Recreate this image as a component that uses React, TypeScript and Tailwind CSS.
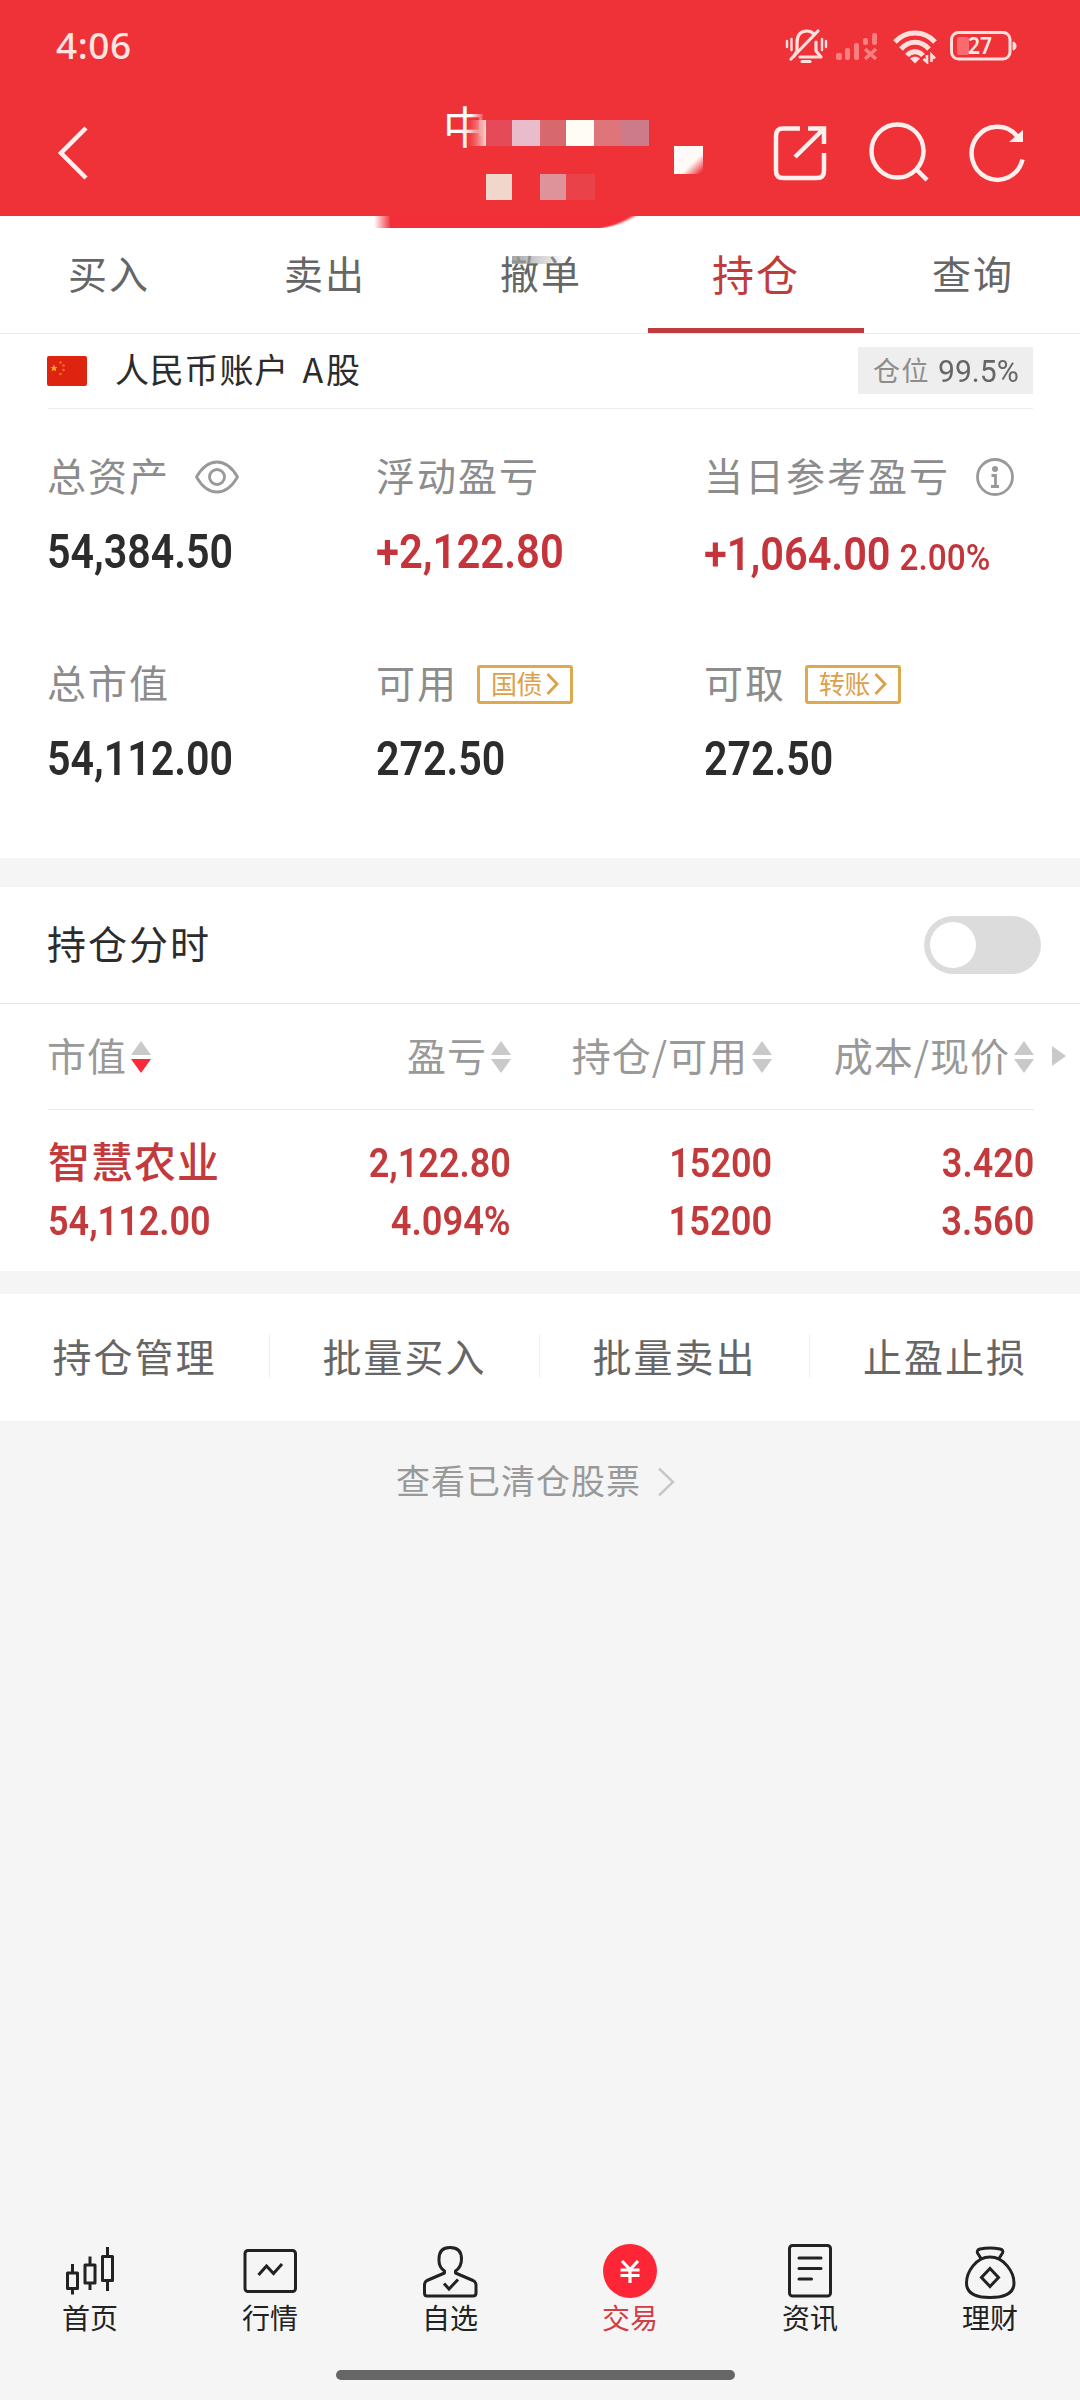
import React from 'react';

const CJK = "font-['Noto_Sans_CJK_SC',sans-serif]";

function Num({ children, className = '' }: { children: React.ReactNode; className?: string }) {
  return (
    <span
      className={`inline-block whitespace-nowrap font-['Roboto','Liberation_Sans',sans-serif] font-semibold leading-none ${className}`}
    >
      {children}
    </span>
  );
}

/* CJK label whose glyphs are optically centred on the row */
function Label({ children }: { children: React.ReactNode }) {
  return <span className="pb-[5px] leading-none">{children}</span>;
}

function Sort({ active = false }: { active?: boolean }) {
  return (
    <svg width="20" height="32" viewBox="0 0 20 32" className="shrink-0">
      <path d="M10 0L20 14H0Z" fill="#c9c9c9" />
      <path d="M0 18H20L10 32Z" fill={active ? '#fa2a3c' : '#c9c9c9'} />
    </svg>
  );
}

function StatusIcons() {
  return (
    <svg width="232" height="36" viewBox="785 28 232 36" fill="none" stroke="#ffe0dc" className="ml-auto">
      <g strokeWidth="3.200" strokeLinecap="round">
        <path d="M794 56L797 51V43C797 34 801 31 807 31C810 31 812 32 814 34" />
        <path d="M816 42V51L821 57H800" strokeLinejoin="round" />
        <path d="M818 31L791 59" />
        <path d="M802 61.500H810" />
        <path d="M787 41V47M791.500 39V50M822 39V50M826 41V47" strokeWidth="2.400" />
      </g>
      <g fill="#fa7f80" stroke="none">
        <rect x="836" y="53" width="6" height="7" rx="2" />
        <rect x="845" y="48" width="5" height="12" rx="2" />
        <rect x="854" y="43" width="5" height="17" rx="2" />
        <rect x="863" y="38" width="5" height="7" rx="2" />
        <rect x="872" y="33" width="5" height="12" rx="2" />
      </g>
      <path d="M865 49L876 59M876 49L865 59" stroke="#fa7f80" strokeWidth="3.500" />
      <g strokeWidth="5">
        <path d="M895 42C906 30 924 30 935 42" />
        <path d="M901 49C909 40 921 40 929 49" />
        <path d="M907 55.500C911 50.500 919 50.500 923 55.500" />
      </g>
      <path d="M910 58.500C913 56 917 56 920 58.500L915 63.500Z" fill="#ffe0dc" stroke="none" />
      <path d="M923.500 59L927 62V55M931.500 62V55L935 58.500" strokeWidth="2.600" />
      <rect x="951.500" y="32.500" width="58.500" height="26.500" rx="7" strokeWidth="3" />
      <rect x="957" y="37" width="12" height="18" rx="2" fill="#fb6a70" stroke="none" />
      <path d="M1013 42C1017 42 1017 50 1013 50Z" fill="#ffe0dc" />
      <text
        x="968"
        y="54"
        fontSize="24"
        fontWeight="600"
        stroke="none"
        fill="#ffe9e6"
        textLength="24"
        lengthAdjust="spacingAndGlyphs"
        fontFamily="Noto Sans, sans-serif"
      >
        27
      </text>
    </svg>
  );
}

function HeaderMosaic() {
  return (
    <svg
      width="345"
      height="170"
      viewBox="370 100 345 170"
      className="pointer-events-none absolute left-[370px] top-[100px] z-10"
    >
      <defs>
        <linearGradient id="fadeIn" x1="0" x2="1">
          <stop offset="0" stopColor="#ef3138" stopOpacity="0" />
          <stop offset="1" stopColor="#f6dcd4" />
        </linearGradient>
        <linearGradient id="cover" x1="0" x2="1">
          <stop offset="0" stopColor="#ef3138" stopOpacity="0" />
          <stop offset="1" stopColor="#ef3138" />
        </linearGradient>
        <linearGradient id="blobLeft" x1="0" x2="1">
          <stop offset="0" stopColor="#f22e38" stopOpacity="0" />
          <stop offset="1" stopColor="#f22e38" />
        </linearGradient>
        <linearGradient id="corner" x1="0" y1="0" x2="1" y2="1">
          <stop offset="0.620" stopColor="#fffaf8" />
          <stop offset="0.950" stopColor="#ef3138" />
        </linearGradient>
        <filter id="soft" x="-10%" y="-50%" width="120%" height="200%">
          <feGaussianBlur stdDeviation="2.500 0" />
        </filter>
      </defs>
      <rect x="470" y="104" width="16" height="48" fill="url(#cover)" />
      <rect x="463" y="120" width="23" height="26" fill="url(#fadeIn)" />
      <rect x="486" y="120" width="27" height="26" fill="#e44a57" />
      <rect x="512" y="120" width="28" height="26" fill="#e8bccb" />
      <rect x="540" y="120" width="26" height="26" fill="#d7686e" />
      <rect x="566" y="120" width="29" height="26" fill="#fffcf6" />
      <rect x="594" y="120" width="28" height="26" fill="#dd757b" />
      <rect x="622" y="120" width="27" height="26" fill="#cd7b8a" />
      <rect x="674" y="146" width="29" height="28" fill="url(#corner)" />
      <rect x="486" y="174" width="26" height="26" fill="#f1d6cc" />
      <rect x="540" y="174" width="26" height="26" fill="#de929a" />
      <rect x="566" y="174" width="29" height="26" fill="#e94249" />
      <rect x="374" y="215" width="17" height="13" fill="url(#blobLeft)" />
      <path d="M390 215H560V228H390Z" fill="#f22e38" />
      <path d="M550 215H636Q618 226 602 228H550Z" fill="#f22e38" filter="url(#soft)" />
    </svg>
  );
}

function Header() {
  return (
    <header className="h-[216px] bg-[#ef3138]">
      <div className="flex h-[92px] items-center pl-14 pr-[63px]">
        <span className="pb-[3px] font-['Noto_Sans',sans-serif] text-[37px] font-medium leading-none tracking-[0.5px] text-[#ffe4e0]">
          4:06
        </span>
        <StatusIcons />
      </div>
      <div className="flex h-[122px] items-center">
        <svg width="32" height="56" viewBox="57 125 32 56" className="ml-[57px]" fill="none" stroke="#fff0ee" strokeWidth="4.500">
          <path d="M86 128L61 153L86 178" />
        </svg>
        <span className={`${CJK} -mt-[57px] ml-[354px] text-[44px] leading-none text-white`}>中</span>
        <svg
          width="260"
          height="64"
          viewBox="770 121 260 64"
          className="ml-auto mr-[50px]"
          fill="none"
          stroke="#fff0ee"
          strokeWidth="4.500"
        >
          <path d="M800 128.500H783Q776 128.500 776 136V171Q776 178 783 178H817Q824 178 824 171V153" />
          <path d="M808 128.500H824V144M824 128.500L795 157" />
          <ellipse cx="897.500" cy="151" rx="26" ry="26.500" />
          <path d="M917 170L927 180" />
          <path d="M1022.500 159.500A25.800 26.500 0 1 1 1017 136" />
          <path d="M1023 130V142H1009Z" fill="#fff0ee" stroke="none" />
        </svg>
      </div>
    </header>
  );
}

function Tabs() {
  return (
    <nav className={`${CJK} grid h-[118px] grid-cols-5 border-b border-[#ececec] bg-white text-[39px] tracking-[2px] text-[#666]`}>
      {['买入', '卖出', '撤单', '持仓', '查询'].map((t) =>
        t === '持仓' ? (
          <div key={t} className="relative flex items-center justify-center pb-[5px] text-[42px] text-[#c03c3c]">
            {t}
            <span className="absolute inset-x-0 bottom-0 h-[5px] bg-[#c03c3c]" />
          </div>
        ) : (
          <div key={t} className="relative flex items-center justify-center pb-[5px] pl-[2px]">
            {t}
            {t === '撤单' && (
              <span className="absolute left-[80px] top-[40px] h-[8px] w-[50px] bg-linear-to-r from-[#999999dd] to-[#dddddd44]" />
            )}
          </div>
        ),
      )}
    </nav>
  );
}

function Flag() {
  return (
    <svg width="40" height="30" viewBox="0 0 40 30">
      <rect width="40" height="30" rx="2" fill="#de2310" />
      <path d="M7 8.500L8 11H10.500L8.600 12.600L9.300 15.500L7 13.800L4.700 15.500L5.400 12.600L3.500 11H6Z" fill="#ffb01f" />
      <g fill="#f4701d">
        <circle cx="13.500" cy="6.500" r="1.300" />
        <circle cx="16.500" cy="9.500" r="1.300" />
        <circle cx="16.500" cy="14" r="1.300" />
        <circle cx="13.500" cy="18" r="1.300" />
      </g>
    </svg>
  );
}

function GoldTag({ children }: { children: string }) {
  return (
    <span className="ml-[19px] flex h-[39px] w-[96px] items-center rounded-[3px] border-[3px] border-[#dda94c] pl-[11px] text-[26px] leading-none tracking-[-0.500px] text-[#dda04a]">
      <span className="pb-[2px]">{children}</span>
      <svg width="13" height="22" viewBox="0 0 13 22" className="ml-1 shrink-0" fill="none" stroke="#dda04a" strokeWidth="2.800">
        <path d="M1.500 1L11 11L1.500 21" />
      </svg>
    </span>
  );
}

const bigNum = 'mt-[24px] origin-left scale-x-[0.858] text-[48px] tracking-normal';

function Account() {
  return (
    <section className={`${CJK} h-[524px] bg-white px-12`}>
      <div className="-mr-px flex h-[75px] items-center border-b border-[#ececec] pb-px">
        <span className="-ml-px">
          <Flag />
        </span>
        <span className="ml-7 pb-[3px] text-[34px] leading-none tracking-[0.8px] text-[#2c2c2c]">
          人民币账户 <span className="ml-[5px] tracking-[3px]">A</span>股
        </span>
        <span className="ml-auto flex h-[47px] w-[175px] items-center bg-[#eee] pl-[15px] text-[27px] leading-none tracking-[1.500px] text-[#8d8d8d]">
          <span className="pb-[3px]">仓位</span>
          <Num className="ml-2 origin-left scale-x-[0.94] text-[32px] !font-normal tracking-normal text-[#666]">99.5%</Num>
        </span>
      </div>
      <div className="-ml-px grid grid-cols-[329px_328px_1fr] pt-[41px] text-[39px] tracking-[2px] text-[#8c8c8c]">
        <div className="h-[207px]">
          <div className="flex h-[54px] items-center">
            <Label>总资产</Label>
            <svg width="44" height="34" viewBox="0 0 44 34" className="ml-[25px]" fill="none" stroke="#999" strokeWidth="2.800">
              <path d="M1.500 17C13 -3 31 -3 42.500 17C31 37 13 37 1.500 17Z" />
              <circle cx="22" cy="17" r="7.500" />
            </svg>
          </div>
          <Num className={`${bigNum} text-[#2c2c2c]`}>54,384.50</Num>
        </div>
        <div className="h-[207px]">
          <div className="flex h-[54px] items-center">
            <Label>浮动盈亏</Label>
          </div>
          <Num className="mt-[24px] origin-left scale-x-[0.87] text-[48px] tracking-normal text-[#c4343a]">+2,122.80</Num>
        </div>
        <div className="h-[207px]">
          <div className="flex h-[54px] items-center whitespace-nowrap">
            <Label>当日参考盈亏</Label>
            <svg width="40" height="40" viewBox="0 0 40 40" className="ml-[25px]" fill="none" stroke="#999" strokeWidth="2.800">
              <circle cx="20" cy="20" r="17.500" />
              <circle cx="20" cy="12" r="3" fill="#999" stroke="none" />
              <path d="M16.500 18.500H20.500V29.500M16 29.500H24" />
            </svg>
          </div>
          <Num className="mt-[27px] origin-left scale-x-[0.902] text-[46px] tracking-normal text-[#c4343a]">
            +1,064.00<span className="ml-[10px] text-[37px] font-medium">2.00%</span>
          </Num>
        </div>
        <div>
          <div className="flex h-[54px] items-center">
            <Label>总市值</Label>
          </div>
          <Num className={`${bigNum} text-[#2c2c2c]`}>54,112.00</Num>
        </div>
        <div>
          <div className="flex h-[54px] items-center">
            <Label>可用</Label>
            <GoldTag>国债</GoldTag>
          </div>
          <Num className={`${bigNum} text-[#2c2c2c]`}>272.50</Num>
        </div>
        <div>
          <div className="flex h-[54px] items-center">
            <Label>可取</Label>
            <GoldTag>转账</GoldTag>
          </div>
          <Num className={`${bigNum} text-[#2c2c2c]`}>272.50</Num>
        </div>
      </div>
    </section>
  );
}

function Holdings() {
  return (
    <section className={`${CJK} mt-[29px] h-[384px] bg-white`}>
      <div className="flex h-[117px] items-center justify-between border-b border-[#e6e6e6] pl-[47px] pr-[39px] text-[39px] tracking-[2px] text-[#2c2c2c]">
        <Label>持仓分时</Label>
        <span className="flex h-[58px] w-[117px] items-center rounded-full bg-[#dcdcdc] pl-[6px]">
          <span className="size-[46px] rounded-full bg-white" />
        </span>
      </div>
      <div className="relative ml-12 mr-[46px] flex h-[106px] items-center border-b border-[#ececec] text-[39px] leading-none tracking-[1px] text-[#999]">
        <div className="-ml-px flex w-[201px] items-center gap-1">
          <Label>市值</Label>
          <Sort active />
        </div>
        <div className="flex w-[263px] items-center justify-end gap-1">
          <Label>盈亏</Label>
          <Sort />
        </div>
        <div className="flex w-[261px] items-center justify-end gap-1">
          <Label>持仓/可用</Label>
          <Sort />
        </div>
        <div className="flex w-[262px] items-center justify-end gap-1">
          <Label>成本/现价</Label>
          <Sort />
        </div>
        <svg width="14" height="20" viewBox="0 0 14 20" className="absolute -right-[32px] top-[42px]">
          <path d="M0 0L14 10L0 20Z" fill="#c9c9c9" />
        </svg>
      </div>
      <div className="ml-12 mr-[46px] grid grid-cols-[200px_263px_261px_262px] pt-[22px] text-[41px] text-[#c23a3c]">
        <div className="flex h-[60px] items-center whitespace-nowrap pb-[5px] text-[42px] font-medium leading-none tracking-[1px]">
          智慧农业
        </div>
        {['2,122.80', '15200', '3.420'].map((v) => (
          <div key={v} className="flex h-[60px] items-center justify-end pt-[2px]">
            <Num className="origin-right scale-x-[0.878]">{v}</Num>
          </div>
        ))}
        <div className="-mt-px flex h-[60px] items-center">
          <Num className="origin-left scale-x-[0.878]">54,112.00</Num>
        </div>
        {['4.094%', '15200', '3.560'].map((v) => (
          <div key={v} className="-mt-px flex h-[60px] items-center justify-end">
            <Num className="origin-right scale-x-[0.884]">{v}</Num>
          </div>
        ))}
      </div>
    </section>
  );
}

function Actions() {
  return (
    <section className={`${CJK} mt-[23px] grid h-[127px] grid-cols-4 bg-white text-[39px] leading-none tracking-[2px] text-[#666]`}>
      {['持仓管理', '批量买入', '批量卖出', '止盈止损'].map((t, i) => (
        <div key={t} className="flex items-center pb-[3px]">
          <span className={`flex h-[44px] flex-1 items-center justify-center pb-[2px] ${i < 3 ? 'border-r border-[#f0f0f0]' : ''}`}>
            {t}
          </span>
        </div>
      ))}
    </section>
  );
}

const stroke = { fill: 'none', stroke: '#222', strokeWidth: 3, strokeLinejoin: 'round' as const, strokeLinecap: 'round' as const };

const navItems: { label: string; icon: React.ReactNode }[] = [
  {
    label: '首页',
    icon: (
      <g {...stroke} strokeLinecap="butt">
        <rect x="7.500" y="33" width="10" height="15.500" />
        <path d="M12.500 24V33M12.500 49V54.500" />
        <rect x="25" y="25" width="10" height="18" />
        <path d="M30 16.500V25M30 43V50" />
        <rect x="42.500" y="16.500" width="10" height="24" />
        <path d="M47.500 7V16M47.500 41V51" />
      </g>
    ),
  },
  {
    label: '行情',
    icon: (
      <g {...stroke}>
        <rect x="5" y="10.500" width="50.500" height="41" rx="3" />
        <path d="M18.500 35L26.500 26L33.500 33.500L42 24" strokeLinecap="butt" strokeLinejoin="miter" />
      </g>
    ),
  },
  {
    label: '自选',
    icon: (
      <g {...stroke}>
        <path d="M24.500 31V33L7 40.500Q4.500 42 4.500 45V53Q4.500 56 7 56H53Q56 56 56 53V45Q56 42 53 40.500L35.500 33V31Q41.500 27 41.500 19C41.500 12 38 7.500 30 7.500S19 12 19 19Q18.500 27 24.500 31Z" />
        <path d="M24 43.500L29 49L38 39.500" strokeLinecap="butt" strokeLinejoin="miter" />
      </g>
    ),
  },
  {
    label: '交易',
    icon: (
      <g>
        <circle cx="30" cy="31" r="27" fill="#fd2636" />
        <path d="M22 21L30 29.500L38 21M20.500 30H39.500M20.500 35.500H39.500M30 29V43" fill="none" stroke="#fff" strokeWidth="3.200" />
      </g>
    ),
  },
  {
    label: '资讯',
    icon: (
      <g {...stroke}>
        <rect x="9.500" y="5.500" width="41" height="50.500" rx="3" />
        <path d="M19 18H41M19 28.500H41M19 39H31.500" />
      </g>
    ),
  },
  {
    label: '理财',
    icon: (
      <g {...stroke}>
        <path d="M21 18.500L17.500 13Q16.500 10 20 9Q30 7 40 9Q44 10 42.500 13L39 18.500" />
        <path d="M30 17C16 17 6.500 32 6.500 43C6.500 54 16 57.500 30 57.500S54 54 54 43C54 32 44 17 30 17Z" />
        <path d="M30 28.500L38.500 37.500L30 46.500L21.500 37.500Z" strokeLinejoin="miter" />
      </g>
    ),
  },
];

function BottomNav() {
  return (
    <footer className={`${CJK} mt-auto`}>
      <nav className="grid h-[131px] grid-cols-6 pt-5">
        {navItems.map((n) => (
          <div key={n.label} className="flex flex-col items-center">
            <svg width="60" height="60" viewBox="0 0 60 60">
              {n.icon}
            </svg>
            <span
              className={`mt-[3px] text-[28px] leading-none ${n.label === '交易' ? 'text-[#d43c46]' : 'text-[#222]'}`}
            >
              {n.label}
            </span>
          </div>
        ))}
      </nav>
      <div className="flex h-[49px] justify-center pr-[9px] pt-[19px]">
        <div className="h-[10px] w-[399px] rounded-full bg-[#666]" />
      </div>
    </footer>
  );
}

export default function App() {
  return (
    <div className="relative flex h-[2400px] w-[1080px] flex-col overflow-hidden bg-[#f5f5f5]">
      <HeaderMosaic />
      <Header />
      <Tabs />
      <Account />
      <Holdings />
      <Actions />
      <div className={`${CJK} mt-[37px] flex h-11 items-center justify-center pr-[9px] text-[34px] leading-none tracking-[1px] text-[#999]`}>
        查看已清仓股票
        <svg width="18" height="30" viewBox="0 0 18 30" className="ml-4 mt-1" fill="none" stroke="#c8c8c8" strokeWidth="2.500">
          <path d="M2 1.500L16 15L2 28.500" />
        </svg>
      </div>
      <BottomNav />
    </div>
  );
}
